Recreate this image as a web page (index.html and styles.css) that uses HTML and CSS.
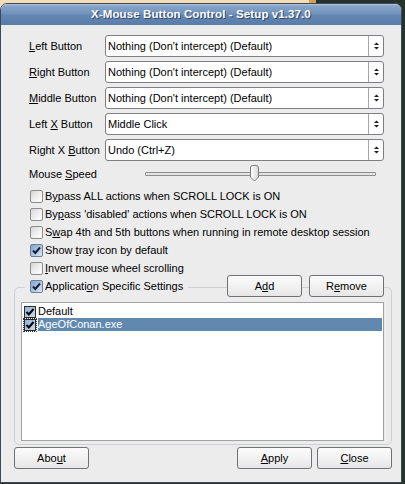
FILE: index.html
```html
<!DOCTYPE html>
<html>
<head>
<meta charset="utf-8">
<title>X-Mouse Button Control - Setup</title>
<link rel="stylesheet" href="styles.css">
</head>
<body>
<div class="window">
  <div class="titlebar">X-Mouse Button Control - Setup v1.37.0</div>
  <div class="body">
    <div class="rows">
      <div class="row"><span class="lbl"><u>L</u>eft Button</span><div class="combo"><span class="val">Nothing (Don't intercept) (Default)</span><span class="spin"><svg width="7" height="10" viewBox="0 0 7 10"><polygon points="1,4 3.5,1.5 6,4" /><polygon points="1,6 6,6 3.5,8.5" /></svg></span></div></div>
      <div class="row"><span class="lbl"><u>R</u>ight Button</span><div class="combo"><span class="val">Nothing (Don't intercept) (Default)</span><span class="spin"><svg width="7" height="10" viewBox="0 0 7 10"><polygon points="1,4 3.5,1.5 6,4" /><polygon points="1,6 6,6 3.5,8.5" /></svg></span></div></div>
      <div class="row"><span class="lbl"><u>M</u>iddle Button</span><div class="combo"><span class="val">Nothing (Don't intercept) (Default)</span><span class="spin"><svg width="7" height="10" viewBox="0 0 7 10"><polygon points="1,4 3.5,1.5 6,4" /><polygon points="1,6 6,6 3.5,8.5" /></svg></span></div></div>
      <div class="row"><span class="lbl">Left <u>X</u> Button</span><div class="combo"><span class="val">Middle Click</span><span class="spin"><svg width="7" height="10" viewBox="0 0 7 10"><polygon points="1,4 3.5,1.5 6,4" /><polygon points="1,6 6,6 3.5,8.5" /></svg></span></div></div>
      <div class="row"><span class="lbl">Right X <u>B</u>utton</span><div class="combo"><span class="val">Undo (Ctrl+Z)</span><span class="spin"><svg width="7" height="10" viewBox="0 0 7 10"><polygon points="1,4 3.5,1.5 6,4" /><polygon points="1,6 6,6 3.5,8.5" /></svg></span></div></div>
    </div>

    <div class="speed">
      <span class="speed-lbl">Mouse <u>S</u>peed</span>
      <div class="slider">
        <div class="track"></div>
        <svg class="thumb" width="11" height="17" viewBox="0 0 11 17"><defs><linearGradient id="tg" x1="0" y1="0" x2="1" y2="0"><stop offset="0" stop-color="#ffffff"/><stop offset="1" stop-color="#d8d8d8"/></linearGradient></defs><path d="M1.5 3 Q1.5 0.5 4 0.5 L7 0.5 Q9.5 0.5 9.5 3 L9.5 12 L5.5 16 L1.5 12 Z" fill="url(#tg)" stroke="#7a7a7a"/></svg>
      </div>
    </div>

    <div class="checks">
      <div class="check"><span class="box"></span><span>B<u>y</u>pass ALL actions when SCROLL LOCK is ON</span></div>
      <div class="check"><span class="box"></span><span>By<u>p</u>ass 'disabled' actions when SCROLL LOCK is ON</span></div>
      <div class="check"><span class="box"></span><span>S<u>w</u>ap 4th and 5th buttons when running in remote desktop session</span></div>
      <div class="check"><span class="box on"><svg width="13" height="13" viewBox="0 0 13 13"><path d="M3 6.5 L5.3 9 L10 3.5" fill="none" stroke="#12203c" stroke-width="2"/></svg></span><span>Show <u>t</u>ray icon by default</span></div>
      <div class="check"><span class="box"></span><span><u>I</u>nvert mouse wheel scrolling</span></div>
    </div>

    <div class="group">
      <div class="group-head">
        <div class="legend"><span class="box on"><svg width="13" height="13" viewBox="0 0 13 13"><path d="M3 6.5 L5.3 9 L10 3.5" fill="none" stroke="#12203c" stroke-width="2"/></svg></span><span>Applicati<u>o</u>n Specific Settings</span></div>
        <div class="head-btns">
          <button class="btn">A<u>d</u>d</button>
          <button class="btn">R<u>e</u>move</button>
        </div>
      </div>
      <div class="list">
        <div class="item"><span class="focus plain"><span class="lbox"><svg width="12" height="12" viewBox="0 0 12 12"><path d="M2.5 6 L4.8 8.5 L9.5 3" fill="none" stroke="#000" stroke-width="2"/></svg></span></span><span class="itext">Default</span></div>
        <div class="item"><span class="focus"><span class="lbox"><svg width="12" height="12" viewBox="0 0 12 12"><path d="M2.5 6 L4.8 8.5 L9.5 3" fill="none" stroke="#000" stroke-width="2"/></svg></span></span><span class="itext sel">AgeOfConan.exe</span></div>
      </div>
    </div>

    <div class="footer">
      <button class="btn">Abo<u>u</u>t</button>
      <div class="footer-right">
        <button class="btn wide"><u>A</u>pply</button>
        <button class="btn wide"><u>C</u>lose</button>
      </div>
    </div>
  </div>
</div>
</body>
</html>
```

FILE: styles.css
```css
* { box-sizing: border-box; }
html, body { margin: 0; padding: 0; }
body {
  width: 405px;
  height: 484px;
  overflow: hidden;
  background:
    linear-gradient(to right, #f3ddb8 0, #f3ddb8 309px, #d9a050 309px, #d9a050 316px, transparent 316px) top left / 100% 12px no-repeat,
    #26322c;
  font: 11px "Liberation Sans", Arial, sans-serif;
  color: #000;
}
u { text-decoration: underline; text-underline-offset: 1px; }

.window {
  margin-top: 3px;
  width: 402px;
  background: #ececec;
  border: 1px solid #3c4a58;
  border-radius: 7px 7px 0 0;
  overflow: hidden;
}
.titlebar {
  height: 21px;
  line-height: 21px;
  text-align: center;
  color: #fff;
  font-weight: bold;
  font-size: 11.5px;
  letter-spacing: 0.1px;
  text-shadow: 1px 1px 0 #34486a;
  background: linear-gradient(#b2c6dd 0, #86a4c8 2px, #7193bd 45%, #6386b2 55%, #5a7ca8 100%);
}
.body {
  padding: 10px 9px 13px 13px;
  display: flex;
  flex-direction: column;
}

.rows { display: flex; flex-direction: column; gap: 4px; padding-left: 15px; }
.row { display: flex; align-items: center; height: 22px; }
.lbl { width: 76px; }
.combo {
  width: 279px;
  height: 22px;
  display: flex;
  background: #fff;
  border: 1px solid #7d7f83;
  border-radius: 3px;
}
.val { flex: 1; padding-left: 2px; line-height: 20px; }
.spin {
  width: 15px;
  border-left: 1px solid #a5a7aa;
  display: flex;
  align-items: center;
  justify-content: center;
}
.spin svg { fill: #1c1c1c; }

.speed { display: flex; align-items: center; height: 18px; margin-top: 4px; padding-left: 15px; }
.speed-lbl { width: 116px; }
.slider { position: relative; width: 231px; height: 18px; display: flex; align-items: center; }
.track {
  width: 100%;
  height: 4px;
  border: 1px solid #8e8e8e;
  background: #e2e2e2;
  border-radius: 1px;
}
.thumb { position: absolute; left: 104px; top: 0; }

.checks { margin-top: 4px; padding-left: 16px; display: flex; flex-direction: column; }
.check { height: 18px; display: flex; align-items: center; gap: 2px; }
.box {
  width: 13px;
  height: 13px;
  flex: none;
  border: 1px solid #8b8d90;
  border-radius: 2px;
  background: linear-gradient(135deg, #d6d6d6 0, #f0f0f0 55%, #ffffff 100%);
  position: relative;
}
.box.on {
  border-color: #6d7f96;
  background: linear-gradient(135deg, #7fa2cc 0, #b4cbe6 60%, #dce8f5 100%);
}
.box svg { position: absolute; left: -1px; top: -1px; }

.group {
  margin-top: 10px;
  border: 1px solid #cfd0d2;
  border-radius: 5px;
  padding: 0 7px 3px 6px;
}
.group-head {
  margin-top: -13px;
  height: 22px;
  display: flex;
  align-items: center;
  justify-content: space-between;
}
.legend {
  display: flex;
  align-items: center;
  gap: 2px;
  background: #ececec;
  margin-left: 4px;
  padding: 0 5px 0 5px;
  height: 18px;
}
.head-btns { display: flex; gap: 7px; }
.btn {
  width: 75px;
  height: 22px;
  padding: 0;
  font: 11px "Liberation Sans", Arial, sans-serif;
  color: #000;
  border: 1px solid #6f7176;
  border-radius: 3px;
  background: linear-gradient(#fbfbfb 0, #f2f2f2 50%, #e6e6e6 100%);
}
.list {
  margin-top: 5px;
  height: 139px;
  border: 1px solid #9fa1a4;
  background: #fff;
  padding: 2px 1px 0 1px;
}
.item { height: 13px; display: flex; align-items: center; }
.focus {
  width: 14px;
  height: 14px;
  flex: none;
  border: 1px dotted #333;
  display: flex;
  align-items: center;
  justify-content: center;
  margin-right: 1px;
}
.focus.plain { border-color: transparent; }
.lbox {
  width: 12px;
  height: 12px;
  border: 1px solid #2a2a2a;
  background: linear-gradient(135deg, #8fb0d6 0, #c8daee 100%);
  position: relative;
}
.lbox svg { position: absolute; left: -1px; top: -1px; }
.itext { flex: 1; height: 13px; line-height: 13px; padding-left: 0; margin-right: 0; }
.itext.sel { background: #6189b0; color: #fff; }

.footer { margin-top: 2px; display: flex; justify-content: space-between; }
.footer-right { display: flex; gap: 5px; }
```
